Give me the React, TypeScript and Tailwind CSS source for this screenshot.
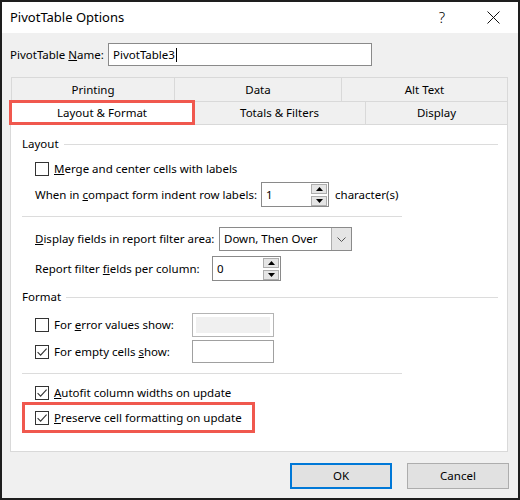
import React from "react";

const Box = ({ checked }: { checked?: boolean }) => (
  <span className="flex h-[14px] w-[14px] shrink-0 items-center justify-center border border-[#333333] bg-white">
    {checked && (
      <svg width="12" height="12" viewBox="0 0 12 12">
        <path d="M1.6 6.2 L4.6 9.2 L10.6 2.6" fill="none" stroke="#333333" strokeWidth="1.1" />
      </svg>
    )}
  </span>
);

const Arrow = ({ up }: { up?: boolean }) => (
  <svg width="7" height="4" viewBox="0 0 7 4">
    <path d={up ? "M0 4 L3.5 0 L7 4 Z" : "M0 0 L3.5 4 L7 0 Z"} fill="#000" />
  </svg>
);

const Spinner = ({ value, className }: { value: string; className: string }) => (
  <div className={`flex h-[25px] shrink-0 items-center border border-[#8a8a8a] bg-white ${className}`}>
    <span className="flex-1 pl-[4px]">{value}</span>
    <div className="mr-[1px] flex flex-col gap-[2px]">
      <span className="flex h-[10px] w-[16px] items-center justify-center border border-[#adadad] bg-[#e5e5e5]">
        <Arrow up />
      </span>
      <span className="flex h-[10px] w-[16px] items-center justify-center border border-[#adadad] bg-[#e5e5e5]">
        <Arrow />
      </span>
    </div>
  </div>
);

const Section = ({ title }: { title: string }) => (
  <div className="flex h-[18px] items-center pl-[11px] pr-[9px]">
    <span>{title}</span>
    <span className="ml-[5px] h-px flex-1 bg-[#dcdcdc]" />
  </div>
);

export default function App() {
  return (
    <div className="flex h-[500px] w-[520px] flex-col border-2 border-[#1e1e1e] bg-[#f0f0f0] font-['Noto_Sans','Open_Sans',sans-serif] text-[11.5px] text-black">
      {/* Title bar */}
      <div className="flex h-[31px] items-center bg-white pl-[8px] pr-[18px]">
        <span className="text-[13px]">PivotTable Options</span>
        <span className="ml-auto text-[15px] font-light">?</span>
        <svg className="ml-[42px]" width="13" height="13" viewBox="0 0 13 13">
          <path d="M0.5 0.5 L12.5 12.5 M12.5 0.5 L0.5 12.5" stroke="#111" strokeWidth="1" />
        </svg>
      </div>

      {/* Name */}
      <div className="mt-[10px] flex h-[23px] items-center pl-[8px]">
        <span className="w-[98px]">
          PivotTable <u>N</u>ame:
        </span>
        <div className="flex h-[23px] w-[264px] items-center border border-[#8a8a8a] bg-white pl-[4px]">
          PivotTable3<span className="ml-px h-[14px] w-px bg-black" />
        </div>
      </div>

      {/* Tabs */}
      <div className="ml-[9px] mt-[11px] w-[497px]">
        <div className="flex h-[24px]">
          <div className="flex w-[164px] items-center justify-center border border-b-0 border-[#d9d9d9]">Printing</div>
          <div className="flex w-[167px] items-center justify-center border border-b-0 border-l-0 border-[#d9d9d9]">Data</div>
          <div className="flex flex-1 items-center justify-center border border-b-0 border-l-0 border-[#d9d9d9]">Alt Text</div>
        </div>
        <div className="flex h-[23px]">
          <div className="relative flex w-[182px] items-center justify-center bg-white">
            Layout &amp; Format
            <span className="absolute -inset-x-[2px] -bottom-[1px] -top-[1px] border-[3px] border-[#f0584e]" />
          </div>
          <div className="flex w-[173px] items-center justify-center border border-b-0 border-[#d9d9d9]">Totals &amp; Filters</div>
          <div className="flex flex-1 items-center justify-center border border-b-0 border-l-0 border-[#d9d9d9]">Display</div>
        </div>
      </div>

      {/* Panel */}
      <div className="ml-[8px] flex h-[328px] w-[498px] flex-col border border-[#d9d9d9] bg-white">
        <div className="mt-[10px]">
          <Section title="Layout" />
        </div>
        <div className="mt-[7px] flex h-[18px] items-center gap-[5px] pl-[24px]">
          <Box />
          <span>
            <u>M</u>erge and center cells with labels
          </span>
        </div>
        <div className="mt-[4px] flex h-[25px] items-center pl-[24px]">
          <span className="w-[226px]">
            When in <u>c</u>ompact form indent row labels:
          </span>
          <Spinner value="1" className="w-[68px]" />
          <span className="ml-[6px]">character(s)</span>
        </div>
        <div className="ml-[11px] mt-[9px] h-px w-[380px] bg-[#dcdcdc]" />
        <div className="mt-[10px] flex h-[24px] items-center pl-[24px]">
          <span className="w-[184px]">
            <u>D</u>isplay fields in report filter area:
          </span>
          <div className="flex h-[24px] w-[133px] items-center border border-[#8a8a8a] bg-white">
            <span className="flex-1 pl-[4px]">Down, Then Over</span>
            <span className="flex h-full w-[20px] items-center justify-center border-l border-[#adadad] bg-[#e5e5e5]">
              <svg width="9" height="5" viewBox="0 0 9 5">
                <path d="M0.5 0.5 L4.5 4.5 L8.5 0.5" fill="none" stroke="#555" strokeWidth="1" />
              </svg>
            </span>
          </div>
        </div>
        <div className="mt-[5px] flex h-[25px] items-center pl-[24px]">
          <span className="w-[177px]">
            Report filter <u>f</u>ields per column:
          </span>
          <Spinner value="0" className="w-[69px]" />
        </div>

        <div className="mt-[7px]">
          <Section title="Format" />
        </div>
        <div className="mt-[7px] flex h-[24px] items-center pl-[24px]">
          <div className="flex w-[157px] items-center gap-[5px]">
            <Box />
            <span>
              For <u>e</u>rror values show:
            </span>
          </div>
          <div className="h-[24px] w-[82px] border border-[#b4b4b4] bg-white p-[3px]">
            <div className="h-full w-full bg-[#f0f0f0]" />
          </div>
        </div>
        <div className="mt-[3px] flex h-[23px] items-center pl-[24px]">
          <div className="flex w-[157px] items-center gap-[5px]">
            <Box checked />
            <span>
              For empty cells <u>s</u>how:
            </span>
          </div>
          <div className="h-[23px] w-[82px] border border-[#a0a0a0] bg-white" />
        </div>
        <div className="ml-[11px] mt-[10px] h-px w-[380px] bg-[#dcdcdc]" />
        <div className="mt-[10px] flex h-[18px] items-center gap-[5px] pl-[24px]">
          <Box checked />
          <span>
            <u>A</u>utofit column widths on update
          </span>
        </div>
        <div className="ml-[11px] flex h-[31px] w-[233px] items-center gap-[5px] border-[3px] border-[#f0584e] pl-[10px]">
          <Box checked />
          <span>
            <u>P</u>reserve cell formatting on update
          </span>
        </div>
      </div>

      {/* Buttons */}
      <div className="mt-[11px] flex justify-end gap-[15px] pr-[9px]">
        <button className="h-[26px] w-[102px] border-2 border-[#0078d7] bg-[#e1e1e1]">OK</button>
        <button className="h-[26px] w-[102px] border border-[#adadad] bg-[#e1e1e1]">Cancel</button>
      </div>
    </div>
  );
}
